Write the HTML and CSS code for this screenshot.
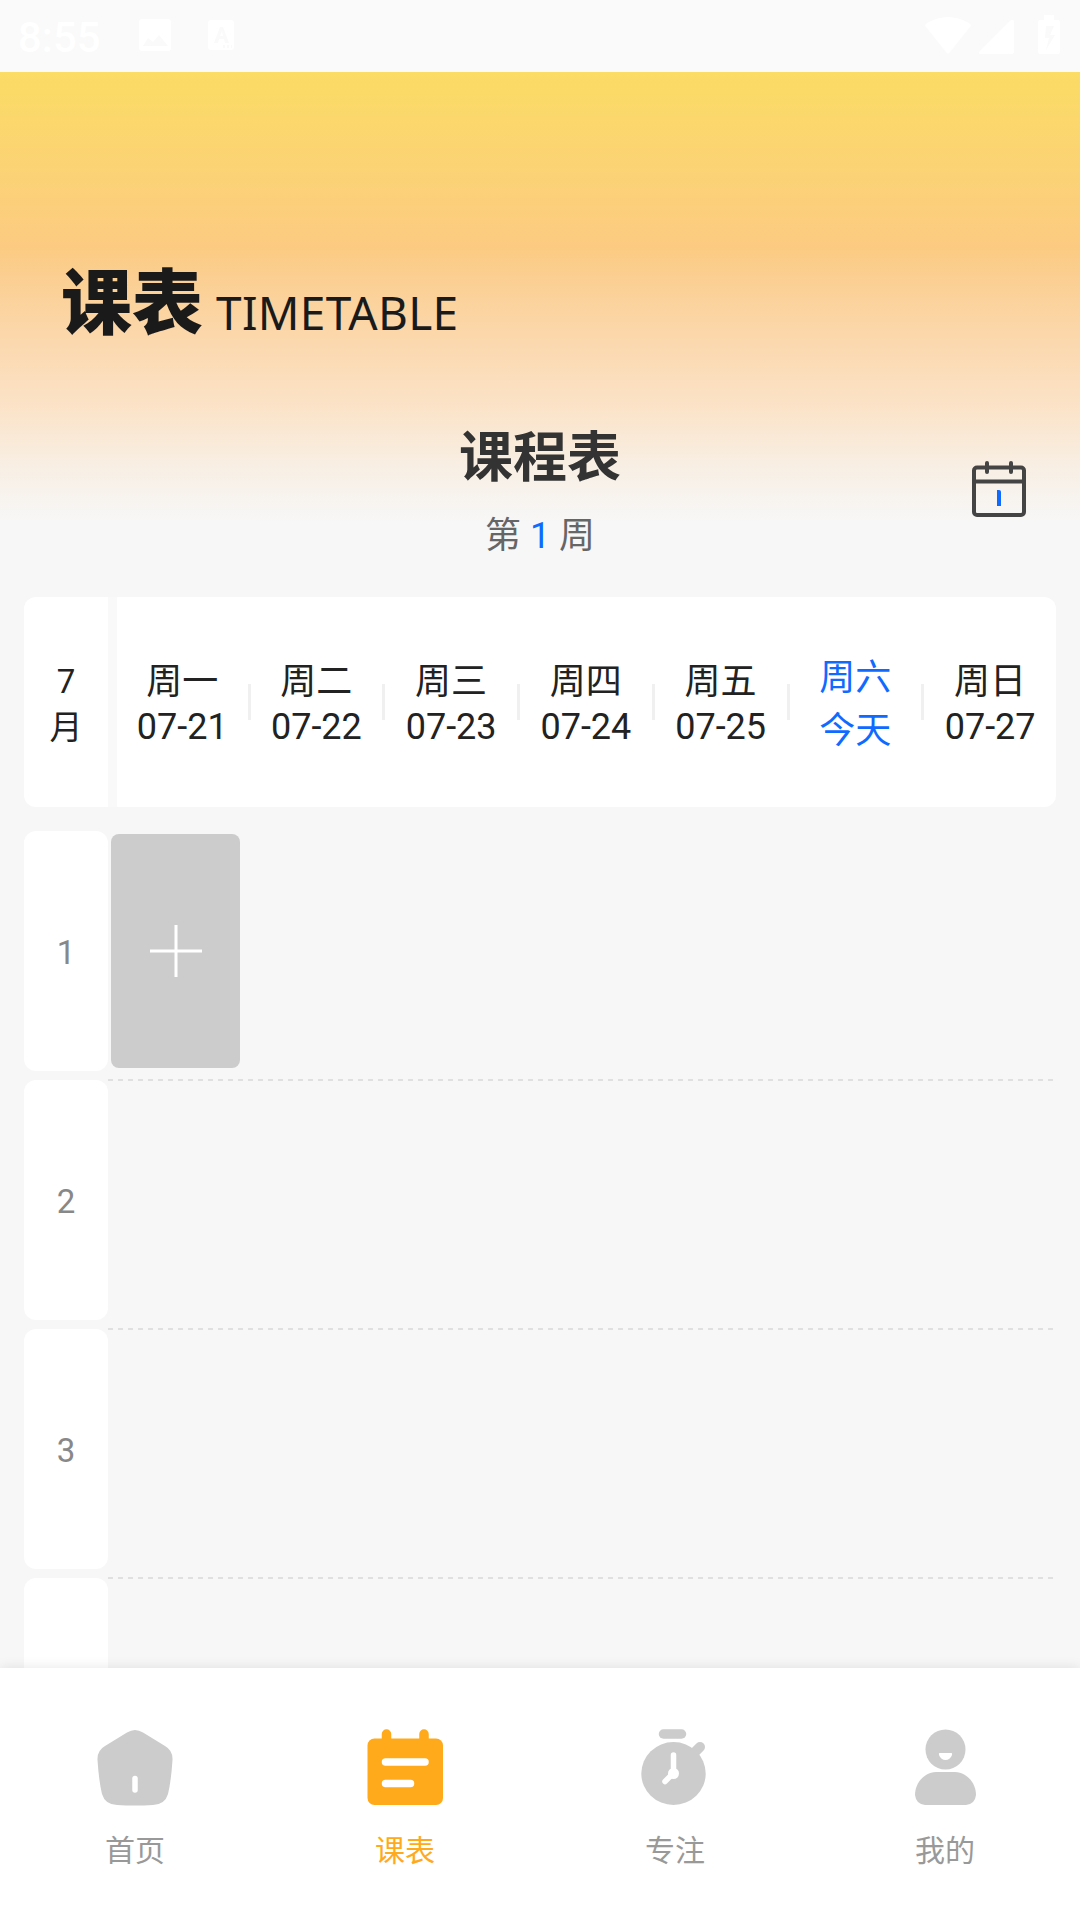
FILE: index.html
```html
<!DOCTYPE html>
<html lang="zh-CN">
<head>
<meta charset="utf-8">
<title>课表</title>
<link rel="stylesheet" href="styles.css">
</head>
<body>
<div class="screen">
  <header class="status">
    <span class="clock">8:55</span>
    <svg class="status-left" width="98" height="36" viewBox="0 0 98 36" fill="#fff">
      <path fill-rule="evenodd" d="M4 1H30a3 3 0 0 1 3 3V30a3 3 0 0 1-3 3H4a3 3 0 0 1-3-3V4a3 3 0 0 1 3-3ZM5 28H30L21 17 15 24 10 20Z"/>
      <path fill-rule="evenodd" d="M73 2H93a3 3 0 0 1 3 3V29a3 3 0 0 1-3 3H73a3 3 0 0 1-3-3V5a3 3 0 0 1 3-3ZM76 25h4l1-4h5l1 4h4L85 9h-3ZM82 18l2-5 1 5ZM85 27v3h2v-3ZM89 27v3h2v-3ZM93 27v3h1v-3Z"/>
    </svg>
    <svg class="status-right" width="136" height="42" viewBox="0 0 136 42" fill="#fff">
      <path d="M2 12Q0 10 3 8Q24-4 45 8Q48 10 46 12L26 37Q24 40 22 37Z"/>
      <path d="M56 36L87 5Q90 4 90 7V37Q90 39 88 39H57Q53 39 56 36Z"/>
      <path fill-rule="evenodd" d="M120 0h10v5h4q2 0 2 2v30q0 2-2 2h-18q-2 0-2-2V7q0-2 2-2h4ZM122 11l-1 12h4l-3 12 9-15h-5l4-9Z"/>
    </svg>
  </header>

  <main class="content">
    <h1 class="brand"><span class="brand-cn">课表</span><span class="brand-en">TIMETABLE</span></h1>

    <section class="week">
      <div class="week-side"></div>
      <div class="week-info">
        <h2 class="week-title">课程表</h2>
        <p class="week-number">第 <span class="accent">1</span> 周</p>
      </div>
      <div class="week-side">
        <svg class="calendar" width="54" height="57" viewBox="0 0 54 57" fill="none" stroke="#444" stroke-width="4">
          <rect x="2" y="6.500" width="50" height="47.500" rx="3"/>
          <path d="M2 20.500H52"/>
          <path d="M15 2V11M39 2V11" stroke-linecap="round"/>
          <path d="M25 29h2q2 0 2 2v14h-4Z" fill="#0f6bff" stroke="none"/>
        </svg>
      </div>
    </section>

    <section class="days">
      <div class="month"><span>7</span><span>月</span></div>
      <div class="day-list">
        <div class="day"><span>周一</span><span>07-21</span></div><i class="rule"></i>
        <div class="day"><span>周二</span><span>07-22</span></div><i class="rule"></i>
        <div class="day"><span>周三</span><span>07-23</span></div><i class="rule"></i>
        <div class="day"><span>周四</span><span>07-24</span></div><i class="rule"></i>
        <div class="day"><span>周五</span><span>07-25</span></div><i class="rule"></i>
        <div class="day today"><span>周六</span><span>今天</span></div><i class="rule"></i>
        <div class="day"><span>周日</span><span>07-27</span></div>
      </div>
    </section>

    <section class="lessons">
      <div class="row">
        <div class="period">1</div>
        <div class="slots">
          <button class="add" aria-label="添加课程">
            <svg width="52" height="52" viewBox="0 0 52 52" stroke="#fff" stroke-width="3"><path d="M26 0V52M0 26H52"/></svg>
          </button>
        </div>
      </div>
      <div class="row"><div class="period">2</div><div class="slots"></div></div>
      <div class="row"><div class="period">3</div><div class="slots"></div></div>
      <div class="row"><div class="period"></div><div class="slots"></div></div>
    </section>
  </main>

  <nav class="tabs">
    <a class="tab">
      <svg width="78" height="78" viewBox="0 0 78 78">
        <path d="M31 4.500Q39-.5 47 4.500L69 18Q77 22.500 76.500 32Q75 54 72 66Q69 76.500 57 77Q39 78 21 77Q9 76.500 6 66Q3 54 1.500 32Q1 22.500 9 18Z" fill="#ccc"/>
        <path d="M39 50.500V62" stroke="#fff" stroke-width="5.500" stroke-linecap="round"/>
      </svg>
      <span>首页</span>
    </a>
    <a class="tab active">
      <svg width="78" height="78" viewBox="0 0 78 78">
        <path d="M20.500 6V18M58 6V18" stroke="#ffaa1b" stroke-width="9.500" stroke-linecap="round"/>
        <rect x="1.500" y="10.500" width="75.500" height="66.500" rx="7" fill="#ffaa1b"/>
        <path d="M19.500 34H59M19.500 55.500H44.500" stroke="#fff" stroke-width="7.500" stroke-linecap="round"/>
      </svg>
      <span>课表</span>
    </a>
    <a class="tab">
      <svg width="78" height="78" viewBox="0 0 78 78">
        <path d="M28 6H46" stroke="#ccc" stroke-width="9.500" stroke-linecap="round" transform="translate(-.5)"/>
        <path d="M58 25L64 19" stroke="#ccc" stroke-width="10" stroke-linecap="round"/>
        <ellipse cx="37.500" cy="45.500" rx="32.200" ry="31.500" fill="#ccc"/>
        <path d="M37.500 27V45L29 53.500" fill="none" stroke="#fff" stroke-width="5.500" stroke-linecap="round"/>
        <circle cx="37.500" cy="45.500" r="5.500" fill="#fff"/>
      </svg>
      <span>专注</span>
    </a>
    <a class="tab">
      <svg width="78" height="78" viewBox="0 0 78 78" fill="#ccc">
        <circle cx="39.500" cy="21.500" r="20"/>
        <path d="M30 44H49C63 45 70 57 70 67Q69 76 60 77H19Q10 76 9 67C9 57 16 45 30 44Z"/>
        <path d="M33.500 25H45.500Q46.500 25 46 27Q44 32 39.500 32T33 27Q32.500 25 33.500 25Z" fill="#fff"/>
      </svg>
      <span>我的</span>
    </a>
  </nav>
</div>
</body>
</html>
```
FILE: styles.css
```css
* { box-sizing: border-box; margin: 0; padding: 0; }
body {
  font-family: Roboto, "Noto Sans CJK SC", sans-serif;
  color: #222;
}
.screen {
  width: 1080px;
  height: 1920px;
  display: flex;
  flex-direction: column;
  overflow: hidden;
}
.status {
  height: 72px;
  flex: none;
  display: flex;
  align-items: flex-start;
  padding: 15px 20px 0 18px;
  background: #fafafa;
  color: #fff;
}
.clock {
  width: 120px;
  padding-top: 1px;
  font-size: 42px;
  line-height: 44px;
  font-weight: 500;
}
.status-left { margin-top: 3px; }
.status-right { margin-left: auto; }

.content {
  flex: 1;
  min-height: 0;
  overflow: hidden;
  padding: 0 24px;
  background: linear-gradient(180deg, #fbdc64 0, #fccb82 176px, #fbcf92 205px, #fbd9b0 275px, #fbe3c8 335px, #f8eee2 390px, #f7f7f7 450px);
}
.brand {
  display: flex;
  height: 320px;
  padding: 180px 0 0 37px;
  color: #1a1a1a;
}
.brand-cn {
  width: 155px;
  padding-top: 2px;
  font-size: 71px;
  line-height: 100px;
  font-weight: 900;
}
.brand-en {
  padding-top: 10px;
  font: 400 46px/100px "Noto Sans", sans-serif;
  letter-spacing: .3px;
}
.week {
  display: flex;
  height: 205px;
}
.week-side {
  flex: 1;
  display: flex;
  justify-content: flex-end;
  padding: 69px 30px 0 0;
}
.week-info { text-align: center; }
.week-title {
  padding-top: 32px;
  font-size: 54px;
  line-height: 70px;
  font-weight: 700;
  color: #333;
}
.week-number {
  padding-top: 17px;
  font-size: 36px;
  line-height: 50px;
  color: #666;
}
.accent { color: #0f6bff; }

.days {
  display: flex;
  gap: 9px;
  height: 210px;
  border-radius: 12px;
  overflow: hidden;
  background: #f9f9f9;
}
.month {
  width: 84px;
  padding-top: 62px;
  display: flex;
  flex-direction: column;
  text-align: center;
  font-size: 33px;
  line-height: 46px;
  background: #fff;
}
.day-list {
  flex: 1;
  display: flex;
  align-items: center;
  background: #fff;
}
.day {
  flex: 1 0 0;
  min-width: 0;
  padding-top: 6px;
  display: flex;
  flex-direction: column;
  text-align: center;
  font-size: 36px;
  line-height: 45px;
}
.day:first-child { flex: 0 0 130.500px; }
.today { color: #0f6bff; line-height: 53px; }
.rule { width: 3px; height: 36px; background: #f0f0f0; }

.lessons {
  display: flex;
  flex-direction: column;
  padding-top: 24px;
}
.row {
  display: flex;
  flex: none;
  height: 249px;
}
.period {
  width: 84px;
  height: 240px;
  border-radius: 12px;
  background: #fff;
  color: #888;
  font-size: 33px;
  line-height: 244px;
  text-align: center;
}
.slots {
  flex: 1;
  height: 250px;
  padding: 3px;
  background: repeating-linear-gradient(90deg, #e0e0e0 0 5px, transparent 5px 10px) 0 100% / 945px 2px no-repeat;
}
.add {
  display: flex;
  align-items: center;
  justify-content: center;
  width: 129px;
  height: 234px;
  border: 0;
  border-radius: 8px;
  background: #ccc;
}

.tabs {
  position: relative;
  display: flex;
  flex: none;
  height: 252px;
  background: #fff;
  box-shadow: 0 0 12px rgba(0, 0, 0, .1);
}
.tab {
  flex: 1;
  display: flex;
  flex-direction: column;
  align-items: center;
  gap: 23px;
  padding-top: 60px;
  font-size: 30px;
  line-height: 44px;
  color: #999;
}
.active { color: #ffaa1b; }
```
